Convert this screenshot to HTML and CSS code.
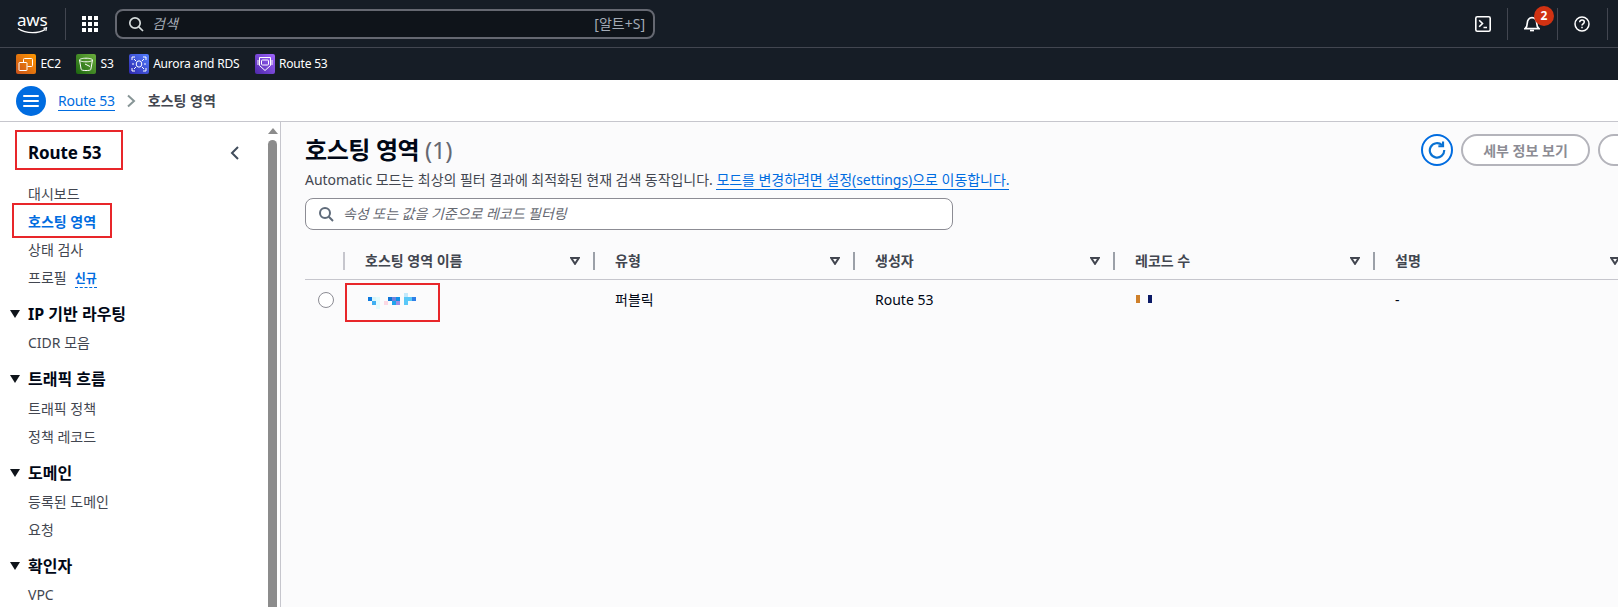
FILE: index.html
```html
<!DOCTYPE html>
<html lang="ko">
<head>
<meta charset="utf-8">
<title>Route 53 호스팅 영역</title>
<link rel="stylesheet" href="styles.css">
</head>
<body>
<header class="topbar">
  <svg class="aws-logo" width="32" height="20" viewBox="0 0 32 20">
    <text x="0" y="12" class="aws-text">aws</text>
    <path d="M1 14.500c4.500 3 9.500 4.200 14.500 4.200 4.500 0 9-1 12.800-3.300" fill="none" stroke="#fff" stroke-width="1.300"/>
    <path d="M26.500 14.300l3-.5-.6 3" fill="none" stroke="#fff" stroke-width="1.200"/>
  </svg>
  <span class="vsep vsep-logo"></span>
  <svg class="grid-icon" width="16" height="16" viewBox="0 0 16 16" fill="#fff">
    <rect x="0" y="0" width="4" height="4"/><rect x="6" y="0" width="4" height="4"/><rect x="12" y="0" width="4" height="4"/>
    <rect x="0" y="6" width="4" height="4"/><rect x="6" y="6" width="4" height="4"/><rect x="12" y="6" width="4" height="4"/>
    <rect x="0" y="12" width="4" height="4"/><rect x="6" y="12" width="4" height="4"/><rect x="12" y="12" width="4" height="4"/>
  </svg>
  <div class="global-search">
    <svg width="16" height="16" viewBox="0 0 16 16" fill="none" stroke="#d5dbdb" stroke-width="1.700"><circle cx="7" cy="7" r="5.200"/><path d="M10.800 10.800L15 15"/></svg>
    <span class="gs-placeholder">검색</span>
    <span class="gs-key">[알트+S]</span>
  </div>
  <div class="top-actions">
    <svg class="ta-shell" width="16" height="16" viewBox="0 0 16 16" fill="none" stroke="#fff" stroke-width="1.600"><rect x=".8" y=".8" width="14.400" height="14.400" rx="1.500"/><path d="M4.200 4.200l3.300 3.300-3.300 3.300M8.500 11.500h3.500"/></svg>
    <span class="vsep"></span>
    <div class="ta-bell">
      <svg width="16" height="16" viewBox="0 0 16 16" fill="none" stroke="#fff" stroke-width="1.700"><path d="M1 12.600h14c-1.800-1.500-2.300-3-2.300-5.600C12.700 4 10.800 1.600 8 1.600S3.300 4 3.300 7c0 2.600-.5 4.100-2.300 5.600z"/><path d="M6 14.500h4"/></svg>
      <span class="badge">2</span>
    </div>
    <span class="vsep"></span>
    <svg class="ta-help" width="16" height="16" viewBox="0 0 16 16" fill="none" stroke="#fff" stroke-width="1.500"><circle cx="8" cy="8" r="7"/><path d="M5.700 6.200c0-1.400 1-2.200 2.300-2.200s2.300.8 2.300 2c0 1.800-2.300 1.800-2.300 3.500"/><path d="M8 10.800v1.500"/></svg>
    <span class="vsep"></span>
  </div>
</header>
<nav class="favbar">
  <a class="fav"><span class="fav-icon fav-orange"><svg width="16" height="16" viewBox="0 0 16 16" fill="none" stroke="#fff" stroke-width="1"><rect x="1" y="6.500" width="8" height="8" rx=".5"/><path d="M5.500 6.500v-3a1 1 0 0 1 1-1h7a1 1 0 0 1 1 1v6a1 1 0 0 1-1 1h-4"/></svg></span>EC2</a>
  <a class="fav"><span class="fav-icon fav-green"><svg width="16" height="16" viewBox="0 0 16 16" fill="none" stroke="#fff" stroke-width="1"><path d="M1.500 4c0-1 2.800-1.800 6.500-1.800s6.500.8 6.500 1.800-2.800 1.800-6.500 1.800S1.500 5 1.500 4z"/><path d="M1.500 4l1.700 9.500c.2 .7 2.300 1 4.800 1s4.600-.3 4.800-1L14.500 4"/><path d="M7 8l5 2.500"/></svg></span>S3</a>
  <a class="fav"><span class="fav-icon fav-blue"><svg width="16" height="16" viewBox="0 0 16 16" fill="none" stroke="#fff" stroke-width="1"><path d="M1 4V1h3M12 1h3v3M1 12v3h3M12 15h3v-3"/><path d="M3 3l2 2M13 3l-2 2M3 13l2-2M13 13l-2-2"/><ellipse cx="8" cy="8" rx="2.800" ry="3.200"/><path d="M1 8h2M13 8h2"/></svg></span>Aurora and RDS</a>
  <a class="fav"><span class="fav-icon fav-purple"><svg width="16" height="16" viewBox="0 0 16 16" fill="none" stroke="#fff" stroke-width="1"><path d="M2.500 1.500h11v8l-5.500 5-5.500-5z"/><path d="M1 4v5M15 4v5"/><rect x="4.500" y="4" width="7" height="5" rx="1"/></svg></span>Route 53</a>
</nav>
<div class="crumbbar">
  <button class="menu-btn" aria-label="메뉴">
    <svg width="16" height="14" viewBox="0 0 16 14" stroke="#fff" stroke-width="2" stroke-linecap="round"><path d="M1 2h14M1 7h14M1 12h14"/></svg>
  </button>
  <a class="crumb-link">Route 53</a>
  <svg class="crumb-sep" width="10" height="14" viewBox="0 0 10 14" fill="none" stroke="#879596" stroke-width="2"><path d="M2 1.500L8 7l-6 5.500"/></svg>
  <span class="crumb-current">호스팅 영역</span>
</div>
<div class="workspace">
  <aside class="sidenav">
    <div class="sn-head">
      <h2 class="sn-title">Route 53</h2>
      <svg class="sn-close" width="10" height="14" viewBox="0 0 10 14" fill="none" stroke="#414d5c" stroke-width="2"><path d="M8 1L2 7l6 6"/></svg>
    </div>
    <ul class="sn-list sn-first">
      <li class="sn-item">대시보드</li>
      <li class="sn-item sn-active">호스팅 영역</li>
      <li class="sn-item">상태 검사</li>
      <li class="sn-item">프로필 <span class="sn-new">신규</span></li>
    </ul>
    <h3 class="sn-section"><span class="tri"></span>IP 기반 라우팅</h3>
    <ul class="sn-list"><li class="sn-item">CIDR 모음</li></ul>
    <h3 class="sn-section"><span class="tri"></span>트래픽 흐름</h3>
    <ul class="sn-list"><li class="sn-item">트래픽 정책</li><li class="sn-item">정책 레코드</li></ul>
    <h3 class="sn-section"><span class="tri"></span>도메인</h3>
    <ul class="sn-list"><li class="sn-item">등록된 도메인</li><li class="sn-item">요청</li></ul>
    <h3 class="sn-section"><span class="tri"></span>확인자</h3>
    <ul class="sn-list"><li class="sn-item">VPC</li></ul>
    <div class="mark mark-title"></div>
    <div class="mark mark-active"></div>
  </aside>
  <div class="scrollbar"><span class="sb-arrow"></span><span class="sb-thumb"></span></div>
  <main class="content">
    <div class="title-row">
      <h1 class="page-title">호스팅 영역 <span class="count">(1)</span></h1>
      <div class="actions">
        <button class="refresh" aria-label="새로 고침">
          <svg width="18" height="18" viewBox="0 0 20 20" fill="none" stroke="#0972d3" stroke-width="2.400"><path d="M15.700 4.800A8 8 0 1 0 18 10"/><path d="M11.500 5.800h5.200V.5"/></svg>
        </button>
        <button class="btn">세부 정보 보기</button>
        <button class="btn btn-next"></button>
      </div>
    </div>
    <p class="desc">Automatic 모드는 최상의 필터 결과에 최적화된 현재 검색 동작입니다. <a class="desc-link">모드를 변경하려면 설정(settings)으로 이동합니다.</a></p>
    <div class="filter">
      <svg width="16" height="16" viewBox="0 0 16 16" fill="none" stroke="#5f6b7a" stroke-width="2"><circle cx="7" cy="7" r="5"/><path d="M10.800 10.800L15 15"/></svg>
      <span class="filter-ph">속성 또는 값을 기준으로 레코드 필터링</span>
    </div>
    <div class="table">
      <div class="t-row t-head">
        <div class="c-radio"></div>
        <div class="c c-1"><span class="th-text">호스팅 영역 이름</span><svg class="sort" width="10" height="8" viewBox="0 0 10 8"><path d="M1.200 1h7.600L5 6.800z" fill="#fff" stroke="#424650" stroke-width="2"/></svg></div>
        <div class="c c-2"><span class="th-text">유형</span><svg class="sort" width="10" height="8" viewBox="0 0 10 8"><path d="M1.200 1h7.600L5 6.800z" fill="#fff" stroke="#424650" stroke-width="2"/></svg></div>
        <div class="c c-3"><span class="th-text">생성자</span><svg class="sort" width="10" height="8" viewBox="0 0 10 8"><path d="M1.200 1h7.600L5 6.800z" fill="#fff" stroke="#424650" stroke-width="2"/></svg></div>
        <div class="c c-4"><span class="th-text">레코드 수</span><svg class="sort" width="10" height="8" viewBox="0 0 10 8"><path d="M1.200 1h7.600L5 6.800z" fill="#fff" stroke="#424650" stroke-width="2"/></svg></div>
        <div class="c c-5"><span class="th-text">설명</span><svg class="sort" width="10" height="8" viewBox="0 0 10 8"><path d="M1.200 1h7.600L5 6.800z" fill="#fff" stroke="#424650" stroke-width="2"/></svg></div>
      </div>
      <div class="t-row t-body">
        <div class="c-radio"><span class="radio"></span></div>
        <div class="c c-1">
          <svg class="mosaic" width="48" height="18" viewBox="0 0 48 18" shape-rendering="crispEdges">
            <rect x="0" y="4" width="4" height="4" fill="#0d7ae0"/><rect x="4" y="8" width="4" height="4" fill="#3fb0f2"/><rect x="4" y="4" width="4" height="4" fill="#d8f6fb"/><rect x="8" y="4" width="4" height="12" fill="#e3fbfd"/>
            <rect x="16" y="8" width="4" height="4" fill="#fbd9e4"/><rect x="20" y="4" width="4" height="4" fill="#1075d8"/>
            <rect x="24" y="4" width="4" height="4" fill="#6f83dc"/><rect x="28" y="4" width="4" height="4" fill="#0f92e8"/><rect x="24" y="8" width="4" height="4" fill="#1fa6ec"/><rect x="28" y="8" width="4" height="4" fill="#a08fe2"/>
            <rect x="36" y="0" width="4" height="4" fill="#c3e9fb"/><rect x="36" y="4" width="8" height="4" fill="#5ac8f8"/><rect x="36" y="8" width="4" height="4" fill="#5ac8f8"/><rect x="44" y="4" width="4" height="4" fill="#2f7fe8"/>
          </svg>
        </div>
        <div class="c c-2">퍼블릭</div>
        <div class="c c-3">Route 53</div>
        <div class="c c-4"><svg class="recmosaic" width="16" height="8" viewBox="0 0 16 8" shape-rendering="crispEdges"><rect x="0" y="0" width="4" height="8" fill="#cf802b"/><rect x="12" y="0" width="4" height="8" fill="#0c1a66"/></svg></div>
        <div class="c c-5">-</div>
      </div>
      <div class="mark mark-row"></div>
    </div>
  </main>
</div>
</body>
</html>
```
FILE: styles.css
```css
* { box-sizing: border-box; }
html, body { margin: 0; padding: 0; height: 607px; overflow: hidden; }
body { width: 1618px; background: #fff; color: #000716; font-family: "Noto Sans", "Noto Sans CJK KR", sans-serif; font-size: 14px; line-height: 20px; }
ul { list-style: none; margin: 0; padding: 0; }
h1, h2, h3, p { margin: 0; }
button { font-family: inherit; padding: 0; cursor: pointer; }

/* top bar */
.topbar { height: 48px; background: #161d26; border-bottom: 1px solid #424650; display: flex; align-items: center; padding-left: 17px; }
.aws-logo { flex: none; overflow: visible; }
.aws-text { font-family: "Noto Sans", sans-serif; font-size: 17px; fill: #fff; letter-spacing: -.2px; }
.vsep { display: block; width: 1px; height: 32px; background: #424650; flex: none; }
.vsep-logo { margin-left: 16px; }
.grid-icon { margin-left: 16px; flex: none; }
.global-search { margin-left: 17px; width: 540px; height: 30px; flex: none; background: #0f141a; border: 2px solid #656871; border-radius: 8px; display: flex; align-items: center; padding: 0 8px 0 11px; color: #a4abb6; }
.gs-placeholder { margin-left: 8px; font-style: italic; font-size: 14px; }
.gs-key { margin-left: auto; font-size: 14px; }
.top-actions { margin-left: auto; margin-right: 10px; display: flex; align-items: center; }
.ta-shell { margin-right: 16px; }
.ta-bell { position: relative; width: 49px; display: flex; justify-content: center; }
.ta-bell svg { margin-right: 1px; }
.badge { position: absolute; left: 26px; top: -10px; width: 20px; height: 20px; border-radius: 50%; background: #d13212; color: #fff; font-size: 12px; font-weight: 700; line-height: 20px; text-align: center; }
.ta-help { margin: 0 17px 0 16px; }

/* favourites */
.favbar { height: 32px; background: #161d26; display: flex; align-items: center; padding-left: 16px; gap: 15.2px; color: #fff; font-size: 12px; letter-spacing: -.2px; }
.fav { display: flex; align-items: center; gap: 4.4px; }
.fav-icon { width: 20px; height: 20px; border-radius: 2px; display: flex; align-items: center; justify-content: center; flex: none; }
.fav-orange { background: linear-gradient(45deg, #c8511b, #ff9900); }
.fav-green { background: linear-gradient(45deg, #1b660f, #6cae3e); }
.fav-blue { background: linear-gradient(45deg, #2e27ad, #527fff); }
.fav-purple { background: linear-gradient(45deg, #4d27a8, #a166ff); }

/* breadcrumbs */
.crumbbar { height: 42px; background: #fff; border-bottom: 1px solid #c6c6cd; display: flex; align-items: center; padding-left: 16px; }
.menu-btn { width: 30px; height: 30px; border: 0; border-radius: 50%; background: #006ce0; display: flex; align-items: center; justify-content: center; }
.crumb-link { margin-left: 12px; color: #006ce0; border-bottom: 1px solid #006ce0; line-height: 19px; letter-spacing: -.2px; }
.crumb-sep { margin-left: 11px; }
.crumb-current { margin-left: 12px; color: #424650; font-weight: 700; font-size: 14px; }

/* workspace */
.workspace { display: flex; height: 485px; }
.sidenav { position: relative; width: 268px; flex: none; padding-top: 12px; overflow: hidden; }
.sn-head { display: flex; align-items: center; justify-content: space-between; padding: 0 28px; height: 38px; }
.sn-title { font-size: 17px; line-height: 24px; font-weight: 700; color: #000716; letter-spacing: -.1px; }
.sn-list { padding-left: 28px; }
.sn-first { margin-top: 8px; margin-bottom: .5px; }
.sn-item { height: 28.1px; display: flex; align-items: center; color: #424650; font-size: 14px; gap: 8px; }
.sn-active { color: #006ce0; font-weight: 700; }
.sn-new { color: #006ce0; font-size: 12px; font-weight: 700; line-height: 16px; border-bottom: 1px dashed #006ce0; margin-top: 2px; }
.sn-section { display: flex; align-items: center; height: 30px; margin-top: 7px; margin-left: 10px; font-size: 16px; line-height: 22px; font-weight: 700; color: #000716; }
.tri { width: 0; height: 0; border: 5px solid transparent; border-top: 8px solid #0f141a; border-bottom: 0; margin-right: 8px; }
.scrollbar { width: 12px; flex: none; display: flex; flex-direction: column; align-items: flex-start; background: #fff; }
.sb-arrow { width: 0; height: 0; margin-top: 6px; border: 5px solid transparent; border-top: 0; border-bottom: 6px solid #8c8c8c; }
.sb-thumb { display: block; width: 9px; flex: 1; margin-top: 6px; background: #8c8c8c; border-radius: 5px 5px 0 0; }

/* main */
.content { flex: none; width: 1338px; background: #fbfbfc; border-left: 1px solid #c6c6cd; padding-left: 24px; overflow: hidden; }
.title-row { display: flex; justify-content: space-between; align-items: flex-start; padding-top: 12px; height: 44px; }
.page-title { font-size: 24px; line-height: 32px; font-weight: 700; color: #000716; letter-spacing: -.4px; }
.count { font-weight: 400; color: #656871; }
.actions { display: flex; align-items: center; gap: 8px; margin-left: auto; }
.refresh { width: 32px; height: 32px; border: 2px solid #006ce0; border-radius: 50%; background: #fff; display: flex; align-items: center; justify-content: center; }
.btn { width: 129px; height: 32px; border: 2px solid #b4b4bb; border-radius: 16px; background: #fff; color: #8c8c94; font-size: 14px; font-weight: 700; }
.btn-next { width: 130px; margin-right: -110px; }
.desc { margin-top: 4px; font-size: 14px; line-height: 20px; color: #424650; white-space: nowrap; letter-spacing: -.04px; }
.desc-link { color: #006ce0; border-bottom: 1px solid #006ce0; }
.filter { margin-top: 8px; width: 648px; height: 32px; background: #fff; border: 1px solid #8c8c94; border-radius: 8px; display: flex; align-items: center; padding-left: 12px; color: #656871; }
.filter-ph { margin-left: 9px; font-style: italic; font-size: 14px; letter-spacing: -.03px; }
.table { position: relative; margin-top: 13px; width: 1400px; }
.t-row { display: grid; grid-template-columns: 38px 250px 260px 260px 260px 260px; }
.t-head { height: 37px; padding-bottom: 1px; border-bottom: 1px solid #c6c6cd; align-items: center; }
.t-body { height: 40px; align-items: center; }
.c-radio { display: flex; padding-left: 13px; }
.c { position: relative; padding-left: 20px; color: #000716; }
.t-head .c { display: flex; align-items: center; height: 18px; border-left: 2px solid #9ba0a8; font-weight: 700; color: #424650; font-size: 14px; }
.t-head .c-1 { border-left-color: #c6c6cd; }
.t-body .c { padding-left: 22px; }
.sort { position: absolute; right: 13px; top: 5px; }
.radio { display: block; width: 16px; height: 16px; border: 1px solid #8c8c94; border-radius: 50%; background: #fff; }
.mosaic { display: block; margin-left: 3px; margin-top: 4px; overflow: visible; }
.recmosaic { display: block; margin-left: 1px; margin-top: -2px; }

/* annotations */
.mark { position: absolute; border: 2px solid #e8262a; pointer-events: none; }
.mark-title { left: 15px; top: 8px; width: 108px; height: 40px; }
.mark-active { left: 12px; top: 81px; width: 100px; height: 35px; }
.mark-row { left: 40px; top: 40px; width: 95px; height: 39px; }
```
